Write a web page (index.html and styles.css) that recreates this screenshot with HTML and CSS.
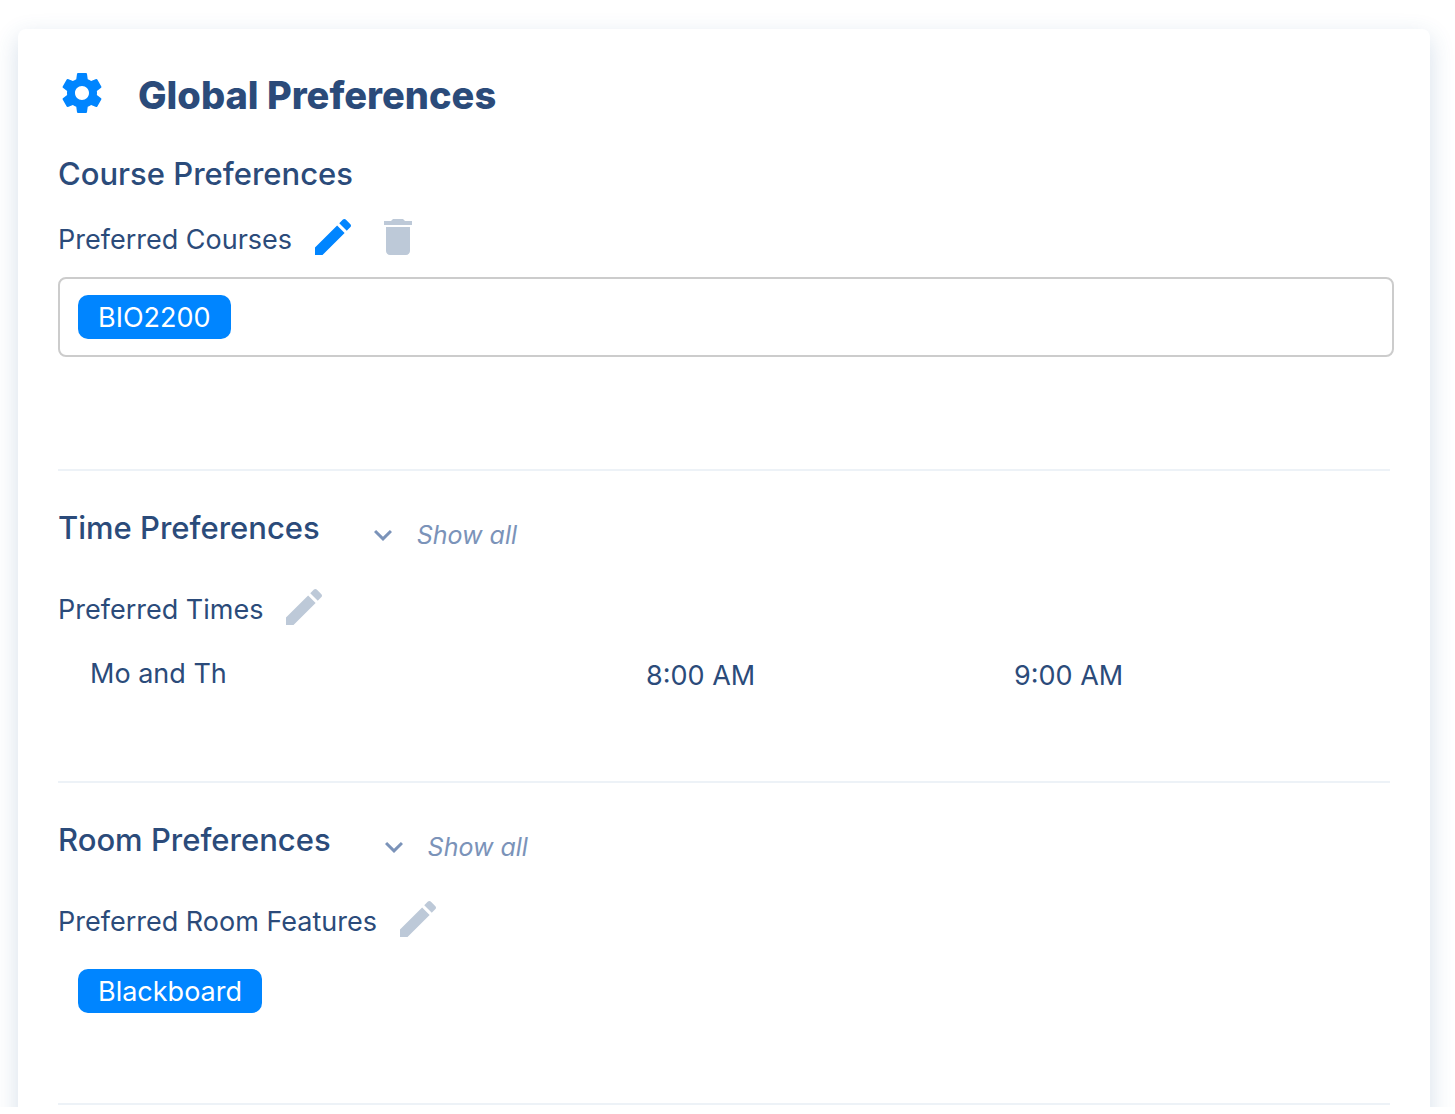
FILE: index.html
```html
<!DOCTYPE html>
<html lang="en">
<head>
  <meta charset="UTF-8">
  <title>Global Preferences</title>
  <meta name="viewport" content="width=device-width, initial-scale=1">
  <link rel="stylesheet" href="styles.css">
</head>
<body>
  <!-- shared icon shapes -->
  <svg class="defs" aria-hidden="true">
    <symbol id="pencil" viewBox="0 0 24 24">
      <path d="M3 17.25V21h3.75L17.81 9.94l-3.75-3.75L3 17.25zM20.71 7.04c.39-.39.39-1.02 0-1.41l-2.34-2.34c-.39-.39-1.02-.39-1.41 0l-1.83 1.83 3.75 3.75 1.83-1.83z"/>
    </symbol>
    <symbol id="trash" viewBox="0 0 24 24">
      <path d="M6 19c0 1.1.9 2 2 2h8c1.1 0 2-.9 2-2V7H6v12zM19 4h-3.5l-1-1h-5l-1 1H5v2h14V4z"/>
    </symbol>
    <symbol id="chevron" viewBox="0 0 24 24">
      <path d="M16.59 8.59L12 13.17 7.41 8.59 6 10l6 6 6-6z"/>
    </symbol>
  </svg>

  <main class="page">
    <div class="card">
      <header class="card-header">
        <svg class="icon blue" viewBox="0 0 24 24" aria-hidden="true">
          <path d="M19.43 12.98c.04-.32.07-.64.07-.98s-.03-.66-.07-.98l2.11-1.65c.19-.15.24-.42.12-.64l-2-3.46c-.12-.22-.39-.3-.61-.22l-2.49 1c-.52-.4-1.08-.73-1.69-.98l-.38-2.65C14.46 2.18 14.25 2 14 2h-4c-.25 0-.46.18-.49.42l-.38 2.65c-.61.25-1.17.59-1.69.98l-2.49-1c-.23-.09-.49 0-.61.22l-2 3.46c-.13.22-.07.49.12.64l2.11 1.65c-.04.32-.07.65-.07.98s.03.66.07.98l-2.11 1.65c-.19.15-.24.42-.12.64l2 3.46c.12.22.39.3.61.22l2.49-1c.52.4 1.08.73 1.69.98l.38 2.65c.03.24.24.42.49.42h4c.25 0 .46-.18.49-.42l.38-2.65c.61-.25 1.17-.59 1.69-.98l2.49 1c.23.09.49 0 .61-.22l2-3.46c.12-.22.07-.49-.12-.64l-2.11-1.65zM12 15.5c-1.93 0-3.5-1.57-3.5-3.5s1.57-3.5 3.5-3.5 3.5 1.57 3.5 3.5-1.57 3.5-3.5 3.5z"/>
        </svg>
        <h1>Global Preferences</h1>
      </header>

      <section class="courses">
        <h2>Course Preferences</h2>
        <div class="label-row">
          <h3>Preferred Courses</h3>
          <button class="icon-btn blue" aria-label="Edit preferred courses"><svg class="icon"><use href="#pencil"/></svg></button>
          <button class="icon-btn" aria-label="Delete preferred courses"><svg class="icon"><use href="#trash"/></svg></button>
        </div>
        <div class="tag-box">
          <span class="tag">BIO2200</span>
        </div>
      </section>

      <section class="times">
        <div class="section-head">
          <h2>Time Preferences</h2>
          <button class="show-all"><svg class="chevron" aria-hidden="true"><use href="#chevron"/></svg>Show all</button>
        </div>
        <div class="label-row">
          <h3>Preferred Times</h3>
          <button class="icon-btn" aria-label="Edit preferred times"><svg class="icon"><use href="#pencil"/></svg></button>
        </div>
        <table class="time-table">
          <tr>
            <td class="days">Mo and Th</td>
            <td class="time start">8:00 AM</td>
            <td class="time">9:00 AM</td>
          </tr>
        </table>
      </section>

      <section class="rooms">
        <div class="section-head">
          <h2>Room Preferences</h2>
          <button class="show-all"><svg class="chevron" aria-hidden="true"><use href="#chevron"/></svg>Show all</button>
        </div>
        <div class="label-row">
          <h3>Preferred Room Features</h3>
          <button class="icon-btn" aria-label="Edit preferred room features"><svg class="icon"><use href="#pencil"/></svg></button>
        </div>
        <div class="tags">
          <span class="tag">Blackboard</span>
        </div>
      </section>
    </div>
  </main>
</body>
</html>
```
FILE: styles.css
```css
* {
  box-sizing: border-box;
}
body {
  margin: 0;
  background: #fff;
  color: #2b4b7a;
  font-family: Inter, "Liberation Sans", sans-serif;
  font-size: 27px;
  line-height: 40px;
}
h1, h2, h3 {
  margin: 0;
}
h1 {
  font-size: 38px;
  font-weight: 850;
  line-height: 48px;
  padding-top: 4px;
}
h2 {
  font-size: 31px;
  font-weight: 500;
}
h3 {
  font-size: 27px;
  font-weight: 400;
  padding-top: 6px;
}
button {
  display: flex;
  align-items: center;
  padding: 0;
  border: none;
  background: none;
  font-family: inherit;
  cursor: pointer;
}
.defs {
  display: none;
}
.page {
  height: calc(100vh - 7px);
  padding: 29px 25px 0 18px;
  overflow: hidden;
}
.card {
  padding: 40px 40px 60px;
  border-radius: 8px;
  background: #fff;
  box-shadow: 0 8px 24px rgba(44, 94, 150, 0.2);
}
.card-header {
  display: flex;
  gap: 32px;
  height: 48px;
  align-items: center;
  margin-bottom: 37px;
}
.icon {
  display: block;
  width: 48px;
  height: 48px;
  fill: currentColor;
}
.icon-btn {
  color: #bdc9d8;
}
.blue {
  color: #0085ff;
}
section {
  border-bottom: 2px solid #edf2f7;
  margin-bottom: 37px;
}
.label-row {
  display: flex;
  align-items: center;
  gap: 17px;
}
.courses {
  padding-bottom: 112px;
}
.courses .label-row {
  margin-top: 19px;
}
.tag-box {
  margin: 16px -4px 0 0;
  padding: 16px 18px;
  border: 2px solid #ccc;
  border-radius: 8px;
  display: flex;
}
.tag {
  padding: 2px 20px 0;
  border-radius: 10px;
  background: #0085ff;
  color: #fff;
  line-height: 42px;
}
.section-head {
  display: flex;
  gap: 45px;
  margin-bottom: 30px;
}
.show-all {
  gap: 16px;
  height: 36px;
  margin-top: 9px;
  color: #7b93b9;
  font-size: 25px;
  font-style: italic;
}
.chevron {
  width: 36px;
  height: 36px;
  fill: currentColor;
}
.times {
  padding-bottom: 85px;
}
.time-table {
  width: 100%;
  margin-top: 23px;
  border-collapse: collapse;
  table-layout: fixed;
}
td {
  padding: 0;
  vertical-align: top;
}
.days {
  width: 588px;
  padding-left: 32px;
}
.time {
  padding-top: 2px;
}
.start {
  width: 368px;
}
.rooms {
  padding-bottom: 90px;
}
.tags {
  display: flex;
  margin-top: 26px;
  padding-left: 20px;
}
```
